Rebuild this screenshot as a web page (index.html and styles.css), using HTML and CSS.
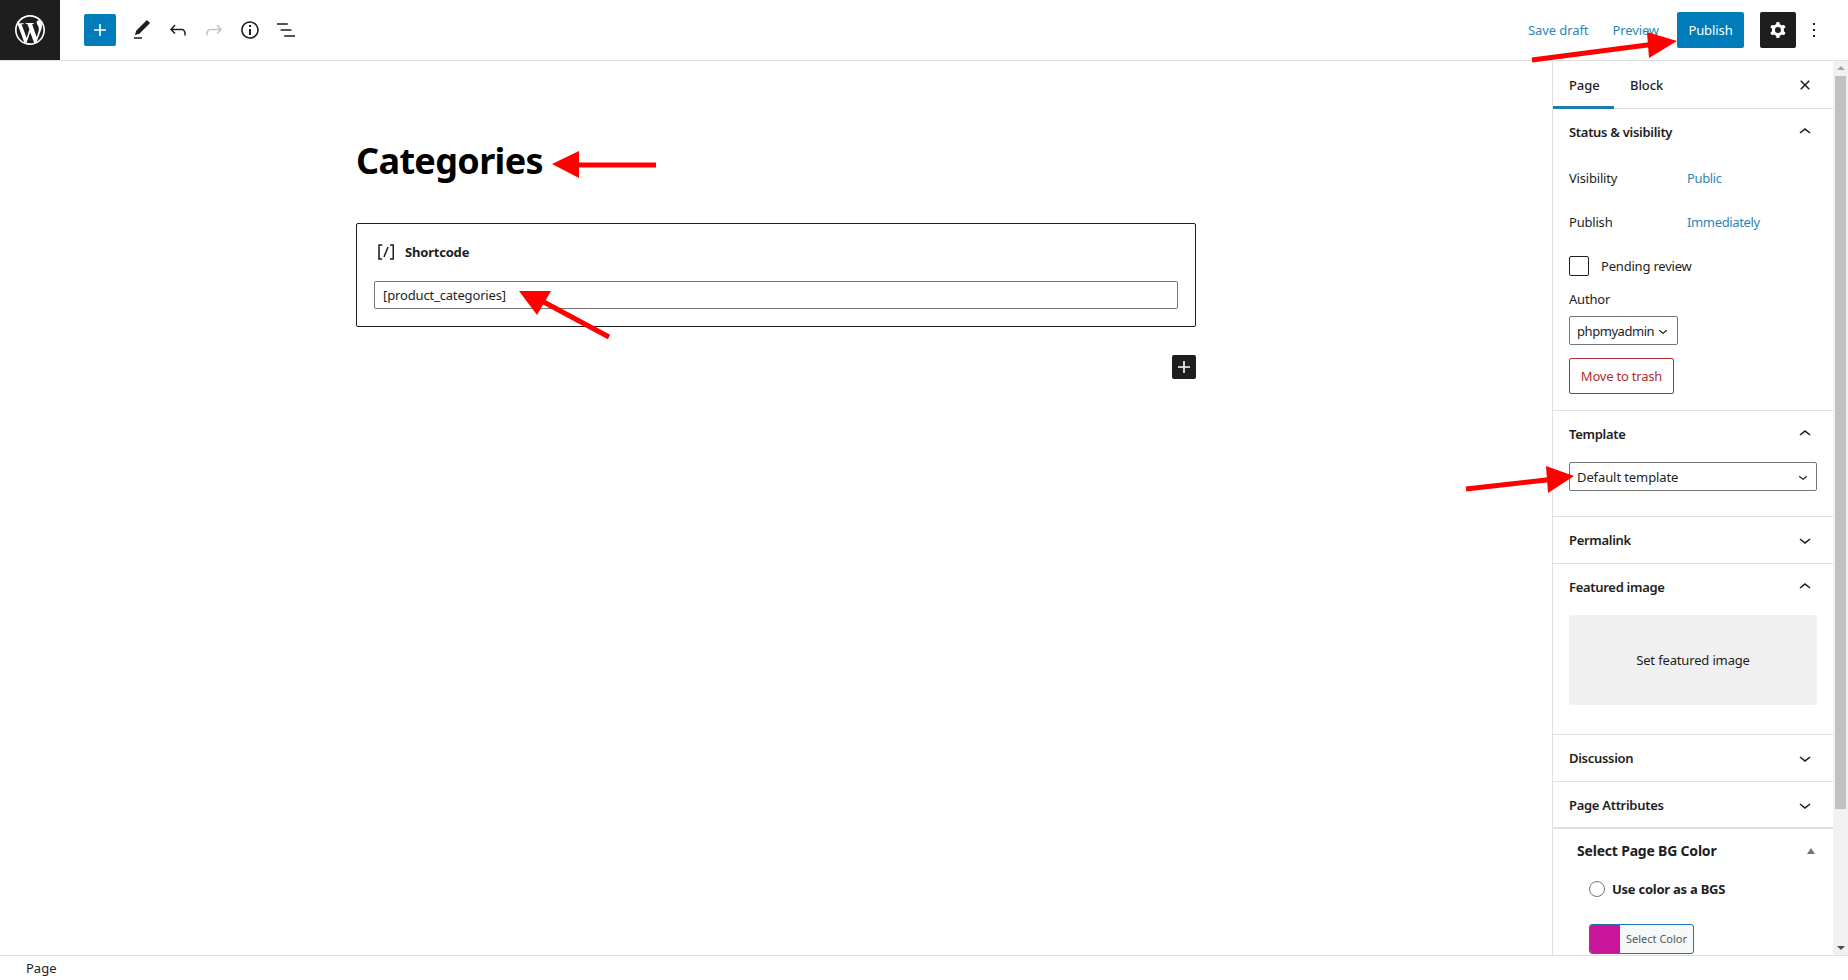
FILE: index.html
```html
<!DOCTYPE html>
<html lang="en">
<head>
<meta charset="utf-8">
<title>Edit Page</title>
<link rel="stylesheet" href="styles.css">
</head>
<body>
<svg class="defs" width="0" height="0" aria-hidden="true">
  <symbol id="i-plus" viewBox="0 0 24 24"><path d="M18 11.2h-5.2V6h-1.6v5.2H6v1.6h5.2V18h1.6v-5.2H18z"/></symbol>
  <symbol id="i-pen" viewBox="0 0 24 24"><path d="M20.1 5.1L16.9 2 6.2 12.7l-1.3 4.4 4.5-1.3L20.1 5.1zM4 20.8h8v-1.5H4v1.5z"/></symbol>
  <symbol id="i-undo" viewBox="0 0 24 24"><path d="M18.3 11.7c-.6-.6-1.4-.9-2.3-.9H6.7l2.9-3.3-1.1-1-4.5 5L8.5 16l1-1-2.7-2.7H16c.5 0 .9.2 1.3.5 1 1 1 3.4 1 4.5v.3h1.5v-.2c0-1.5 0-4.3-1.5-5.7z"/></symbol>
  <symbol id="i-redo" viewBox="0 0 24 24"><path d="M15.6 6.5l-1.1 1 2.9 3.3H8c-.9 0-1.7.3-2.3.9-1.4 1.5-1.4 4.2-1.4 5.6v.2h1.5v-.3c0-1.1 0-3.5 1-4.5.3-.3.7-.5 1.3-.5h9.2L14.5 15l1.1 1.1 4.6-4.6-4.6-5z"/></symbol>
  <symbol id="i-info" viewBox="0 0 24 24"><path d="M12 3.2c-4.8 0-8.8 3.9-8.8 8.8 0 4.8 3.9 8.8 8.8 8.8 4.8 0 8.8-3.9 8.8-8.8 0-4.8-4-8.8-8.8-8.8zm0 16c-4 0-7.2-3.3-7.2-7.2C4.8 8 8 4.8 12 4.8s7.2 3.3 7.2 7.2c0 4-3.2 7.2-7.2 7.2zM11 17h2v-6h-2v6zm0-8h2V7h-2v2z"/></symbol>
  <symbol id="i-list" viewBox="0 0 24 24"><path d="M13.8 5.2H3v1.5h10.8V5.2zm-3.6 12v1.5H21v-1.5H10.2zm7.2-6H6.6v1.5h10.8v-1.5z"/></symbol>
  <symbol id="i-cog" viewBox="0 0 24 24"><path fill-rule="evenodd" d="M10.289 4.836A1 1 0 0111.275 4h1.306a1 1 0 01.987.836l.244 1.466c.787.26 1.503.679 2.108 1.218l1.393-.522a1 1 0 011.216.437l.653 1.13a1 1 0 01-.23 1.273l-1.148.944a6.025 6.025 0 010 2.435l1.149.946a1 1 0 01.23 1.272l-.653 1.13a1 1 0 01-1.216.437l-1.394-.522c-.605.54-1.32.958-2.108 1.218l-.244 1.466a1 1 0 01-.987.836h-1.306a1 1 0 01-.986-.836l-.244-1.466a5.995 5.995 0 01-2.108-1.218l-1.394.522a1 1 0 01-1.217-.436l-.653-1.131a1 1 0 01.23-1.272l1.149-.946a6.026 6.026 0 010-2.435l-1.148-.944a1 1 0 01-.23-1.272l.653-1.131a1 1 0 011.217-.437l1.393.522a5.994 5.994 0 012.108-1.218l.244-1.466zM14.929 12a3 3 0 11-6 0 3 3 0 016 0z"/></symbol>
  <symbol id="i-more" viewBox="0 0 24 24"><path d="M13 19h-2v-2h2v2zm0-6h-2v-2h2v2zm0-6h-2V5h2v2z"/></symbol>
  <symbol id="i-close" viewBox="0 0 24 24"><path d="M12 13.06l3.712 3.713 1.061-1.06L13.061 12l3.712-3.712-1.06-1.06L12 10.938 8.288 7.227l-1.061 1.06L10.939 12l-3.712 3.712 1.06 1.061L12 13.061z"/></symbol>
  <symbol id="i-up" viewBox="0 0 24 24"><path d="M6.5 12.4L12 8l5.5 4.4-.9 1.2L12 10l-4.5 3.6-1-1.2z"/></symbol>
  <symbol id="i-down" viewBox="0 0 24 24"><path d="M17.5 11.6L12 16l-5.5-4.4.9-1.2L12 14l4.6-3.6 1 1.2z"/></symbol>
  <symbol id="i-code" viewBox="0 0 24 24"><path d="M16 4.2v1.5h2.5v12.5H16v1.5h4V4.2h-4zM4.2 19.8h4v-1.5H5.8V5.8h2.5V4.2h-4l-.1 15.6zm5.1-3.1l1.4.6 4-10-1.4-.6-4 10z"/></symbol>
</svg>

<div class="app">
  <header class="topbar">
    <a class="wp-logo" href="#" aria-label="WordPress">
      <svg viewBox="0 0 20 20" width="30" height="30"><path fill="#fff" d="M20 10c0-5.51-4.49-10-10-10C4.48 0 0 4.49 0 10c0 5.52 4.48 10 10 10 5.51 0 10-4.48 10-10zM7.78 15.37L4.37 6.22c.55-.02 1.17-.08 1.17-.08.5-.06.44-.72-.06-.69 0 0-1.45.11-2.37.11-.18 0-.37 0-.58-.01C4.12 2.69 6.87 1.11 10 1.11c2.33 0 4.45.87 6.05 2.34-.68-.11-1.65.39-1.65 1.58 0 .74.45 1.36.9 2.1.35.61.55 1.36.55 2.46 0 1.49-1.4 5-1.4 5l-3.03-8.37c.54-.02.82-.17.82-.17.5-.05.44-.79-.06-.76 0 0-1.44.12-2.38.12-.87 0-2.33-.12-2.33-.12-.5-.03-.56.73-.06.76l.92.08 1.26 3.41zM17.41 10c.24-.64.74-1.87.43-4.25.7 1.29 1.05 2.71 1.05 4.25 0 3.29-1.73 6.24-4.4 7.78.97-2.59 1.94-5.2 2.92-7.78zM6.1 18.09C3.12 16.65 1.11 13.53 1.11 10c0-1.3.23-2.48.72-3.59C3.25 10.3 4.67 14.2 6.1 18.09zm4.03-6.63l2.58 6.98c-.86.29-1.76.45-2.71.45-.79 0-1.57-.11-2.29-.33.81-2.38 1.62-4.74 2.42-7.1z"/></svg>
    </a>
    <div class="tools">
      <button class="inserter" type="button" aria-label="Add block"><svg class="ic"><use href="#i-plus"/></svg></button>
      <button class="tool" type="button" aria-label="Tools"><svg class="ic"><use href="#i-pen"/></svg></button>
      <button class="tool" type="button" aria-label="Undo"><svg class="ic"><use href="#i-undo"/></svg></button>
      <button class="tool is-disabled" type="button" aria-label="Redo"><svg class="ic"><use href="#i-redo"/></svg></button>
      <button class="tool" type="button" aria-label="Details"><svg class="ic"><use href="#i-info"/></svg></button>
      <button class="tool" type="button" aria-label="List view"><svg class="ic"><use href="#i-list"/></svg></button>
    </div>
    <div class="actions">
      <a class="link-action save" href="#">Save draft</a>
      <a class="link-action preview" href="#">Preview</a>
      <button class="publish" type="button">Publish</button>
      <button class="settings" type="button" aria-label="Settings"><svg class="ic"><use href="#i-cog"/></svg></button>
      <button class="more" type="button" aria-label="Options"><svg class="ic"><use href="#i-more"/></svg></button>
    </div>
  </header>

  <div class="middle">
    <main class="editor">
      <div class="canvas">
        <h1 class="page-title">Categories</h1>
        <section class="sc-block">
          <div class="sc-label"><svg class="ic"><use href="#i-code"/></svg><span>Shortcode</span></div>
          <div class="sc-input">[product_categories]</div>
        </section>
        <div class="append-row">
          <button class="append" type="button" aria-label="Add block"><svg class="ic"><use href="#i-plus"/></svg></button>
        </div>
      </div>
    </main>

    <aside class="sidebar">
      <div class="side-scroll">
        <div class="tabs">
          <span class="tab is-active">Page</span>
          <span class="tab">Block</span>
          <svg class="ic tab-close"><use href="#i-close"/></svg>
        </div>

        <section class="panel status">
          <div class="panel-head"><h2>Status &amp; visibility</h2><svg class="ic"><use href="#i-up"/></svg></div>
          <div class="kv"><span class="kv-key">Visibility</span><a class="kv-val" href="#">Public</a></div>
          <div class="kv"><span class="kv-key">Publish</span><a class="kv-val" href="#">Immediately</a></div>
          <div class="check-row"><span class="checkbox"></span><span>Pending review</span></div>
          <div class="author-label">Author</div>
          <div class="select author-select"><span>phpmyadmin</span><svg class="ic-sm"><use href="#i-down"/></svg></div>
          <button class="trash" type="button">Move to trash</button>
        </section>

        <section class="panel template">
          <div class="panel-head"><h2>Template</h2><svg class="ic"><use href="#i-up"/></svg></div>
          <div class="select template-select"><span>Default template</span><svg class="ic-sm"><use href="#i-down"/></svg></div>
        </section>

        <section class="panel">
          <div class="panel-head"><h2>Permalink</h2><svg class="ic"><use href="#i-down"/></svg></div>
        </section>

        <section class="panel featured">
          <div class="panel-head"><h2>Featured image</h2><svg class="ic"><use href="#i-up"/></svg></div>
          <div class="featured-box">Set featured image</div>
        </section>

        <section class="panel">
          <div class="panel-head"><h2>Discussion</h2><svg class="ic"><use href="#i-down"/></svg></div>
        </section>

        <section class="panel attrs">
          <div class="panel-head"><h2>Page Attributes</h2><svg class="ic"><use href="#i-down"/></svg></div>
        </section>

        <section class="metabox">
          <div class="meta-head"><h2>Select Page BG Color</h2><span class="tri-up"></span></div>
          <label class="radio-row"><span class="radio"></span><span>Use color as a BGS</span></label>
          <div class="color-btn"><span class="swatch"></span><span class="color-text">Select Color</span></div>
        </section>
      </div>
      <div class="scrollbar">
        <span class="sb-arrow up"></span>
        <span class="sb-thumb"></span>
        <span class="sb-arrow down"></span>
      </div>
    </aside>
  </div>

  <footer class="statusbar">Page</footer>
</div>

<svg class="arrows" width="1848" height="980" viewBox="0 0 1848 980" aria-hidden="true">
  <g class="arrow">
    <line x1="1532" y1="60" x2="1655" y2="44"/><polygon points="1677,41 1647,32 1649,58"/>
    <line x1="656" y1="165" x2="575" y2="165"/><polygon points="552,164 579,151 579,178"/>
    <line x1="609" y1="337" x2="540" y2="300"/><polygon points="519,291 551,291 537,315"/>
    <line x1="1466" y1="489" x2="1555" y2="479"/><polygon points="1574,476 1546,466 1548,493"/>
  </g>
</svg>
</body>
</html>
```

FILE: styles.css
```css
* { box-sizing: border-box; }
html, body { margin: 0; height: 100%; overflow: hidden; background: #fff; }
body {
  font-family: "Noto Sans", "Open Sans", sans-serif;
  font-size: 13px;
  color: #1e1e1e;
}
h1, h2 { margin: 0; }
button {
  font: inherit;
  border: 0;
  background: none;
  padding: 0;
  color: inherit;
}
a { text-decoration: none; }
.defs { position: absolute; }
.ic { width: 24px; height: 24px; fill: currentColor; display: block; flex: none; }
.ic-sm { width: 18px; height: 18px; fill: currentColor; display: block; flex: none; }

.app { height: 980px; display: flex; flex-direction: column; }

/* top bar */
.topbar {
  height: 61px;
  flex: none;
  display: flex;
  align-items: center;
  border-bottom: 1px solid #e0e0e0;
  padding-bottom: 1px;
}
.wp-logo {
  width: 60px;
  height: 60px;
  margin-bottom: -1px;
  background: #1e1e1e;
  display: flex;
  align-items: center;
  justify-content: center;
}
.tools { display: flex; align-items: center; padding-left: 24px; }
.inserter {
  width: 32px; height: 32px;
  margin-right: 8px;
  background: #007cba;
  color: #fff;
  border-radius: 2px;
  display: flex; align-items: center; justify-content: center;
}
.tool {
  width: 36px; height: 36px;
  display: flex; align-items: center; justify-content: center;
}
.is-disabled { color: #c4c4c4; }
.actions { margin-left: auto; display: flex; align-items: center; padding-right: 22px; }
.link-action { color: #2c86b4; letter-spacing: -.1px; }
.save { margin-right: 24px; }
.preview { margin-right: 18px; }
.publish {
  width: 67px; height: 36px;
  background: #007cba;
  color: #fff;
  border-radius: 2px;
  letter-spacing: -.1px;
}
.settings {
  width: 36px; height: 36px;
  margin-left: 16px;
  background: #1e1e1e;
  color: #fff;
  border-radius: 2px;
  display: flex; align-items: center; justify-content: center;
}
.more { margin-left: 6px; width: 24px; height: 24px; }

/* middle */
.middle { flex: 1; min-height: 0; display: flex; }
.editor { flex: 1; min-width: 0; }
.canvas { width: 840px; margin: 0 auto; padding-top: 73px; }
.page-title {
  font-size: 36px;
  line-height: 54px;
  font-weight: 700;
  color: #000;
  letter-spacing: -.65px;
}
.sc-block {
  margin-top: 35px;
  height: 104px;
  border: 1px solid #1e1e1e;
  border-radius: 2px;
  padding: 16px 17px 0;
}
.sc-label {
  height: 24px;
  display: flex;
  align-items: center;
  gap: 7px;
  font-weight: 700;
  font-size: 13px;
  letter-spacing: -.2px;
}
.sc-input {
  margin-top: 17px;
  height: 28px;
  border: 1px solid #757575;
  border-radius: 2px;
  padding: 0 8px;
  line-height: 26px;
  font-size: 13px;
  width: 804px;
  letter-spacing: -.15px;
}
.append-row { display: flex; justify-content: flex-end; margin-top: 28px; }
.append {
  width: 24px; height: 24px;
  background: #1e1e1e;
  color: #fff;
  border-radius: 2px;
}

/* sidebar */
.sidebar {
  width: 296px;
  flex: none;
  display: flex;
  border-left: 1px solid #e0e0e0;
  overflow: hidden;
}
.side-scroll { flex: 1; min-width: 0; overflow: hidden; }
.tabs {
  height: 48px;
  display: flex;
  align-items: center;
  border-bottom: 1px solid #e0e0e0;
  font-weight: 500;
  letter-spacing: -.1px;
}
.tab { height: 47px; display: flex; align-items: center; padding: 0 16px; }
.tab.is-active { box-shadow: inset 0 -3px 0 #1a7eab; width: 61px; margin-bottom: -1px; height: 48px; }
.tab-close { margin-left: auto; margin-right: 16px; }

.panel { border-bottom: 1px solid #e0e0e0; padding: 0 16px; letter-spacing: -.2px; }
.panel-head {
  height: 46px;
  display: flex;
  align-items: center;
  justify-content: space-between;
}
.panel-head h2 { font-size: 13px; font-weight: 600; letter-spacing: -.3px; }
.status { height: 302px; }
.status .panel-head { height: 45px; margin-bottom: 2px; }
.kv { height: 44px; display: flex; align-items: center; }
.kv-key { width: 118px; }
.kv-val { color: #2c86b4; letter-spacing: -.35px; }
.check-row { height: 44px; display: flex; align-items: center; gap: 12px; }
.checkbox {
  width: 20px; height: 20px;
  border: 1px solid #1e1e1e;
  border-radius: 2px;
}
.author-label { line-height: 20px; margin-top: 1px; }
.select {
  display: flex;
  align-items: center;
  justify-content: space-between;
  border: 1px solid #757575;
  border-radius: 2px;
  padding: 0 6px 0 7px;
  background: #fff;
}
.author-select { width: 109px; height: 29px; margin-top: 7px; letter-spacing: -.45px; }
.trash {
  display: block;
  width: 105px; height: 36px;
  margin-top: 13px;
  border: 1px solid #b32d2e;
  border-radius: 2px;
  color: #b32d2e;
  letter-spacing: -.2px;
}
.template { height: 106px; }
.template-select { height: 29px; margin-top: 5px; padding-right: 4px; letter-spacing: -.1px; }
.panel:not(.status):not(.template):not(.featured) { height: 47px; }
.featured { height: 171px; }
.featured-box {
  height: 90px;
  margin-top: 5px;
  background: #f0f0f0;
  border-radius: 2px;
  display: flex; align-items: center; justify-content: center;
  letter-spacing: -.15px;
}
.panel.attrs { height: 48px; border-bottom-width: 2px; }

.metabox { padding: 0 18px 0 24px; }
.meta-head {
  height: 43px;
  display: flex;
  align-items: center;
  justify-content: space-between;
}
.meta-head h2 { font-size: 14px; font-weight: 700; letter-spacing: -.2px; }
.tri-up {
  width: 0; height: 0;
  border: 4px solid transparent;
  border-top: 0;
  border-bottom: 6px solid #757575;
}
.radio-row {
  display: flex;
  align-items: center;
  gap: 7px;
  margin: 6px 0 0 12px;
  font-weight: 700;
  height: 22px;
  letter-spacing: -.25px;
}
.radio {
  width: 16px; height: 16px;
  border: 1px solid #757575;
  border-radius: 50%;
  background: #fff;
}
.color-btn {
  display: flex;
  width: 105px; height: 30px;
  margin: 24px 0 0 12px;
  border: 1px solid #2271b1;
  border-radius: 3px;
  background: #f6f7f7;
  overflow: hidden;
}
.swatch { width: 30px; background: #c9169b; }
.color-text { font-size: 11px; line-height: 28px; padding-left: 6px; color: #50575e; white-space: nowrap; }

.scrollbar {
  width: 15px;
  flex: none;
  background: #f1f1f1;
  display: flex;
  flex-direction: column;
  align-items: center;
}
.sb-thumb { width: 11px; height: 733px; margin-top: 6px; background: #c1c1c1; flex: none; }
.sb-arrow { width: 0; height: 0; border: 4px solid transparent; flex: none; }
.sb-arrow.up { border-top: 0; border-bottom: 4px solid #a3a3a3; margin-top: 5px; }
.sb-arrow.down { border-bottom: 0; border-top: 4px solid #505050; margin-top: auto; margin-bottom: 5px; }

.statusbar {
  height: 25px;
  flex: none;
  border-top: 1px solid #e0e0e0;
  padding-left: 26px;
  line-height: 24px;
}

/* annotation arrows drawn over the screenshot */
.arrows { position: absolute; left: 0; top: 0; pointer-events: none; }
.arrow line { stroke: #f00; stroke-width: 5; }
.arrow polygon { fill: #f00; }
```
